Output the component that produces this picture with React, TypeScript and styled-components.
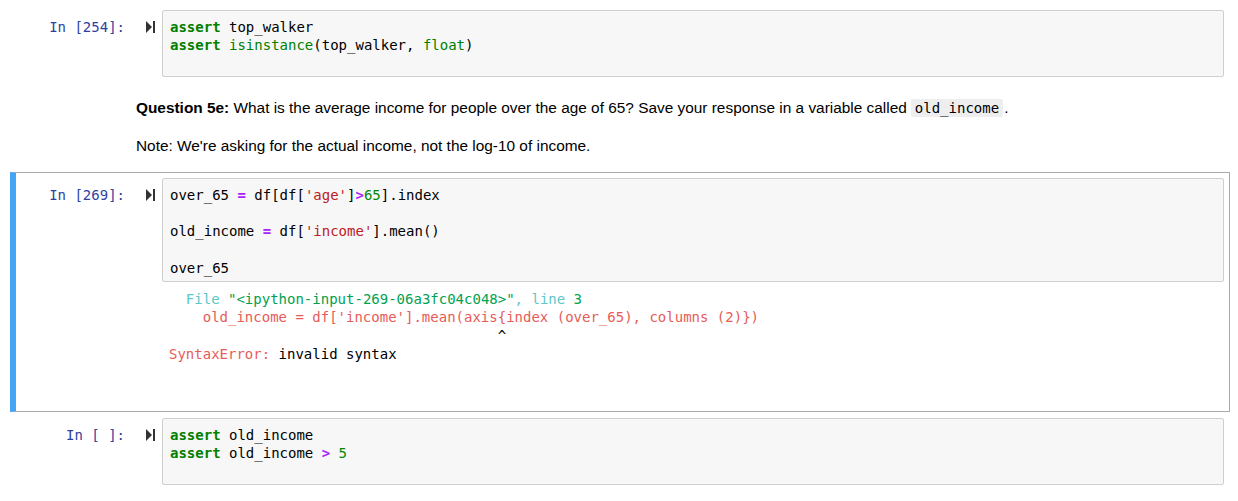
import styled, { createGlobalStyle } from 'styled-components'
import { FC, ReactNode } from 'react'

const GlobalStyle = createGlobalStyle`
  body {
    margin: 0;
    background: #ffffff;
    font-family: 'Liberation Sans', Arial, sans-serif;
  }
`

const Notebook = styled.div`
  padding: 4px 8px 0 10px;
  display: flex;
  flex-direction: column;
`

const Cell = styled.div<{ $selected?: boolean }>`
  display: flex;
  flex-direction: column;
  border: 1px solid ${(p) => (p.$selected ? '#ababab' : 'transparent')};
  border-left: 6px solid ${(p) => (p.$selected ? '#42a5f5' : 'transparent')};
  padding: 5px;
`

const Row = styled.div`
  display: flex;
  align-items: flex-start;
`

const PromptArea = styled.div`
  width: 141px;
  flex: none;
  display: flex;
  align-items: flex-start;
  padding-top: 8px;
`

const Prompt = styled.div`
  flex: 1;
  text-align: right;
  font-family: 'DejaVu Sans Mono', 'Liberation Mono', monospace;
  font-size: 14px;
  line-height: 18px;
  color: #303f9f;
  white-space: pre;
`

const RunButton = styled.div`
  width: 37px;
  display: flex;
  justify-content: flex-start;
  padding-left: 21px;
  padding-top: 3px;
  box-sizing: border-box;
  color: #333;
`

const InputArea = styled.pre`
  flex: 1;
  margin: 0;
  background: #f7f7f7;
  border: 1px solid #cfcfcf;
  border-radius: 2px;
  padding: 7px 7px 4px;
  font-family: 'DejaVu Sans Mono', 'Liberation Mono', monospace;
  font-size: 14px;
  line-height: 18.2px;
  color: #000;
  min-height: 54px;
`

const Kw = styled.span`
  color: #008000;
  font-weight: bold;
`
const Builtin = styled.span`
  color: #008000;
`
const Op = styled.span`
  color: #aa22ff;
  font-weight: bold;
`
const Str = styled.span`
  color: #ba2121;
`
const Num = styled.span`
  color: #008800;
`

const OutputArea = styled.pre`
  flex: 1;
  margin: 0;
  padding: 8px 0 43px 7px;
  font-family: 'DejaVu Sans Mono', 'Liberation Mono', monospace;
  font-size: 14px;
  line-height: 18.3px;
  color: #000;
`

const Ansi = styled.span<{ $c: string }>`
  color: ${(p) => p.$c};
`

const MarkdownBody = styled.div`
  padding: 9px 0 10px 115px;
  font-size: 15.4px;
  line-height: 20px;
  color: #000;

  p {
    margin: 0;
  }
  p + p {
    margin-top: 18px;
  }
`

const InlineCode = styled.code`
  font-family: 'DejaVu Sans Mono', 'Liberation Mono', monospace;
  font-size: 14px;
  background: #eeeeee;
  padding: 1px 4px;
  border-radius: 2px;
  margin: 0 1px 0 4px;
`

const StepIcon: FC = () => (
  <svg width="9" height="12" viewBox="0 0 9 12">
    <polygon points="0,0 6,6 0,12" fill="currentColor" />
    <rect x="7" y="0" width="2" height="12" fill="currentColor" />
  </svg>
)

interface CodeCellProps {
  count: string
  selected?: boolean
  children: ReactNode
  output?: ReactNode
}

const CodeCell: FC<CodeCellProps> = ({ count, selected, children, output }) => (
  <Cell $selected={selected}>
    <Row>
      <PromptArea>
        <Prompt>In [{count}]:</Prompt>
        <RunButton>
          <StepIcon />
        </RunButton>
      </PromptArea>
      <InputArea>{children}</InputArea>
    </Row>
    {output && (
      <Row>
        <PromptArea />
        <OutputArea>{output}</OutputArea>
      </Row>
    )}
  </Cell>
)

const RED = '#e75c58'
const CYAN = '#60c6c8'
const GREEN = '#00a250'

export default function App() {
  return (
    <>
      <GlobalStyle />
      <Notebook>
        <CodeCell count="254">
          <Kw>assert</Kw> top_walker{'\n'}
          <Kw>assert</Kw> <Builtin>isinstance</Builtin>(top_walker, <Builtin>float</Builtin>){'\n'}
        </CodeCell>

        <Cell>
          <MarkdownBody>
            <p>
              <b>Question 5e:</b> What is the average income for people over the age of 65? Save your
              response in a variable called<InlineCode>old_income</InlineCode>.
            </p>
            <p>Note: We're asking for the actual income, not the log-10 of income.</p>
          </MarkdownBody>
        </Cell>

        <CodeCell
          count="269"
          selected
          output={
            <>
              {'  '}
              <Ansi $c={CYAN}>File </Ansi>
              <Ansi $c={GREEN}>"&lt;ipython-input-269-06a3fc04c048&gt;"</Ansi>
              <Ansi $c={CYAN}>, line </Ansi>
              <Ansi $c={GREEN}>3</Ansi>
              {'\n'}
              <Ansi $c={RED}>{"    old_income = df['income'].mean(axis{index (over_65), columns (2)})"}</Ansi>
              {'\n'}
              {'                                       ^\n'}
              <Ansi $c={RED}>SyntaxError:</Ansi> invalid syntax
            </>
          }
        >
          over_65 <Op>=</Op> df[df[<Str>'age'</Str>]<Op>&gt;</Op><Num>65</Num>].index{'\n'}
          {'\n'}
          old_income <Op>=</Op> df[<Str>'income'</Str>].mean(){'\n'}
          {'\n'}
          over_65
        </CodeCell>

        <CodeCell count=" ">
          <Kw>assert</Kw> old_income{'\n'}
          <Kw>assert</Kw> old_income <Op>&gt;</Op> <Num>5</Num>
          {'\n'}
        </CodeCell>
      </Notebook>
    </>
  )
}
